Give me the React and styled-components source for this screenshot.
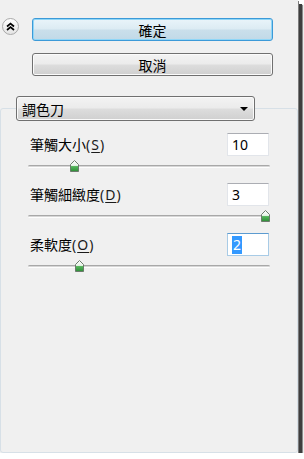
import styled, { createGlobalStyle } from 'styled-components'

const GlobalStyle = createGlobalStyle`
    html, body {
        margin: 0;
        padding: 0;
        background: #ffffff;
    }
    body {
        font-family: "Noto Sans CJK TC", "Noto Sans", sans-serif;
        font-size: 14px;
        color: #000;
    }
`

const sliders = [
    { label: '筆觸大小', key: 'S', value: '10', pos: 0.18 },
    { label: '筆觸細緻度', key: 'D', value: '3', pos: 1 },
    { label: '柔軟度', key: 'O', value: '2', pos: 0.2, focused: true },
]

const Panel = styled.div`
    width: 298px;
    height: 453px;
    background: #f0f0f0;
    display: flex;
    flex-direction: column;
    box-sizing: border-box;
    box-shadow: 1px 1px 0 #7c7c7c, 4px 4px 0 #3e3e3e, 5px 5px 1px rgba(0, 0, 0, 0.45);
`

const Top = styled.div`
    display: grid;
    grid-template-columns: 32px 241px;
    row-gap: 12px;
    padding-top: 18px;
    align-items: start;
`

const Collapse = styled.div`
    width: 17px;
    height: 17px;
    margin-left: 2px;
    box-sizing: border-box;
    border-radius: 50%;
    border: 1px solid #a9a9a9;
    background: linear-gradient(#ffffff, #e4e4e4);
    display: flex;
    align-items: center;
    justify-content: center;
`

const Button = styled.button`
    grid-column: 2;
    height: 23px;
    padding: 0;
    box-sizing: border-box;
    border-radius: 3px;
    font-family: inherit;
    font-size: 14px;
    line-height: 1;
    color: #000;
    border: 1px solid ${(p) => (p.$primary ? '#3c9ad8' : '#707070')};
    background: ${(p) =>
        p.$primary
            ? 'linear-gradient(#e9f4fa 0%, #dcebf3 48%, #cadfeb 52%, #c1d9e7 100%)'
            : 'linear-gradient(#f3f3f3 0%, #ebebeb 48%, #dddddd 52%, #cfcfcf 100%)'};
    box-shadow: ${(p) => (p.$primary ? 'inset 0 0 0 1px #8fd6f7' : 'inset 0 0 0 1px #fbfbfb')};
`

const Combo = styled.div`
    position: relative;
    z-index: 1;
    margin: 20px 0 -13px 16px;
    width: 239px;
    height: 25px;
    box-sizing: border-box;
    border: 1px solid #707070;
    border-radius: 3px;
    background: linear-gradient(#f3f3f3 0%, #ebebeb 48%, #dddddd 52%, #d0d0d0 100%);
    box-shadow: inset 0 0 0 1px #fafafa;
    display: flex;
    align-items: center;
    justify-content: space-between;
    padding: 0 6px 0 5px;
    line-height: 1;
`

const Arrow = styled.span`
    width: 0;
    height: 0;
    border-left: 4px solid transparent;
    border-right: 4px solid transparent;
    border-top: 4px solid #000;
`

const GroupBox = styled.div`
    flex: 1;
    border: 1px solid #d7e0e7;
    border-radius: 3px;
    padding: 24px 27px 0 27px;
    display: flex;
    flex-direction: column;
`

const Row = styled.div`
    height: 50px;
    display: flex;
    flex-direction: column;
`

const InputLine = styled.div`
    height: 23px;
    display: flex;
    align-items: center;
    justify-content: space-between;
`

const Label = styled.span`
    margin-left: 2px;
    line-height: 1;
    color: #000;
`

const Hotkey = styled.span`
    font-family: "Noto Sans", sans-serif;
    letter-spacing: 1px;
    color: #1a1a1a;

    u {
        text-decoration-thickness: 1px;
        text-underline-offset: 2px;
    }
`

const TextBox = styled.div`
    width: 42px;
    height: 23px;
    margin-right: 1px;
    box-sizing: border-box;
    background: #fff;
    border: 1px solid ${(p) => (p.$focused ? '#a8cbe6' : '#e2e5ea')};
    border-top-color: ${(p) => (p.$focused ? '#5c9bd0' : '#abadb3')};
    display: flex;
    align-items: center;
    padding-left: 4px;
    font-family: "Noto Sans", sans-serif;
    font-size: 14px;
    line-height: 1;
`

const Selected = styled.span`
    background: #3399ff;
    color: #fff;
    padding: 2px 1px;
`

const SliderBox = styled.div`
    position: relative;
    height: 27px;
`

const Track = styled.div`
    margin-top: 9px;
    height: 3px;
    box-sizing: border-box;
    border-radius: 2px;
    border-top: 1px solid #a8a8a8;
    border-bottom: 1px solid #fdfdfd;
    background: #d6d6d6;
`

const Thumb = styled.svg`
    position: absolute;
    top: 4px;
    margin-left: -4px;
`

const ThumbIcon = ({ left }) => (
    <Thumb width="9" height="12" viewBox="0 0 9 12" style={{ left }}>
        <defs>
            <linearGradient id="tg" x1="0" y1="0" x2="0" y2="1">
                <stop offset="0" stopColor="#ffffff" />
                <stop offset="0.45" stopColor="#e8f4e8" />
                <stop offset="0.55" stopColor="#53b55a" />
                <stop offset="1" stopColor="#2e8d38" />
            </linearGradient>
        </defs>
        <path d="M4.5 0.5 L8.5 4.5 L8.5 11.5 L0.5 11.5 L0.5 4.5 Z" fill="url(#tg)" stroke="#6c7a6c" strokeWidth="1" />
    </Thumb>
)

const Slider = ({ pos }) => (
    <SliderBox>
        <Track />
        <ThumbIcon left={4 + Math.round(pos * 233)} />
    </SliderBox>
)

const App = () => (
    <>
        <GlobalStyle />
        <Panel>
            <Top>
                <Collapse>
                    <svg width="9" height="9" viewBox="0 0 9 9">
                        <path d="M1 4.5 L4.5 1.5 L8 4.5 M1 8 L4.5 5 L8 8" fill="none" stroke="#000" strokeWidth="1.7" />
                    </svg>
                </Collapse>
                <Button $primary>確定</Button>
                <Button>取消</Button>
            </Top>
            <Combo>
                <span>調色刀</span>
                <Arrow />
            </Combo>
            <GroupBox>
                {sliders.map((s) => (
                    <Row key={s.key}>
                        <InputLine>
                            <Label>
                                {s.label}
                                <Hotkey>
                                    (<u>{s.key}</u>)
                                </Hotkey>
                            </Label>
                            <TextBox $focused={s.focused}>
                                {s.focused ? <Selected>{s.value}</Selected> : s.value}
                            </TextBox>
                        </InputLine>
                        <Slider pos={s.pos} />
                    </Row>
                ))}
            </GroupBox>
        </Panel>
    </>
)

export default App
